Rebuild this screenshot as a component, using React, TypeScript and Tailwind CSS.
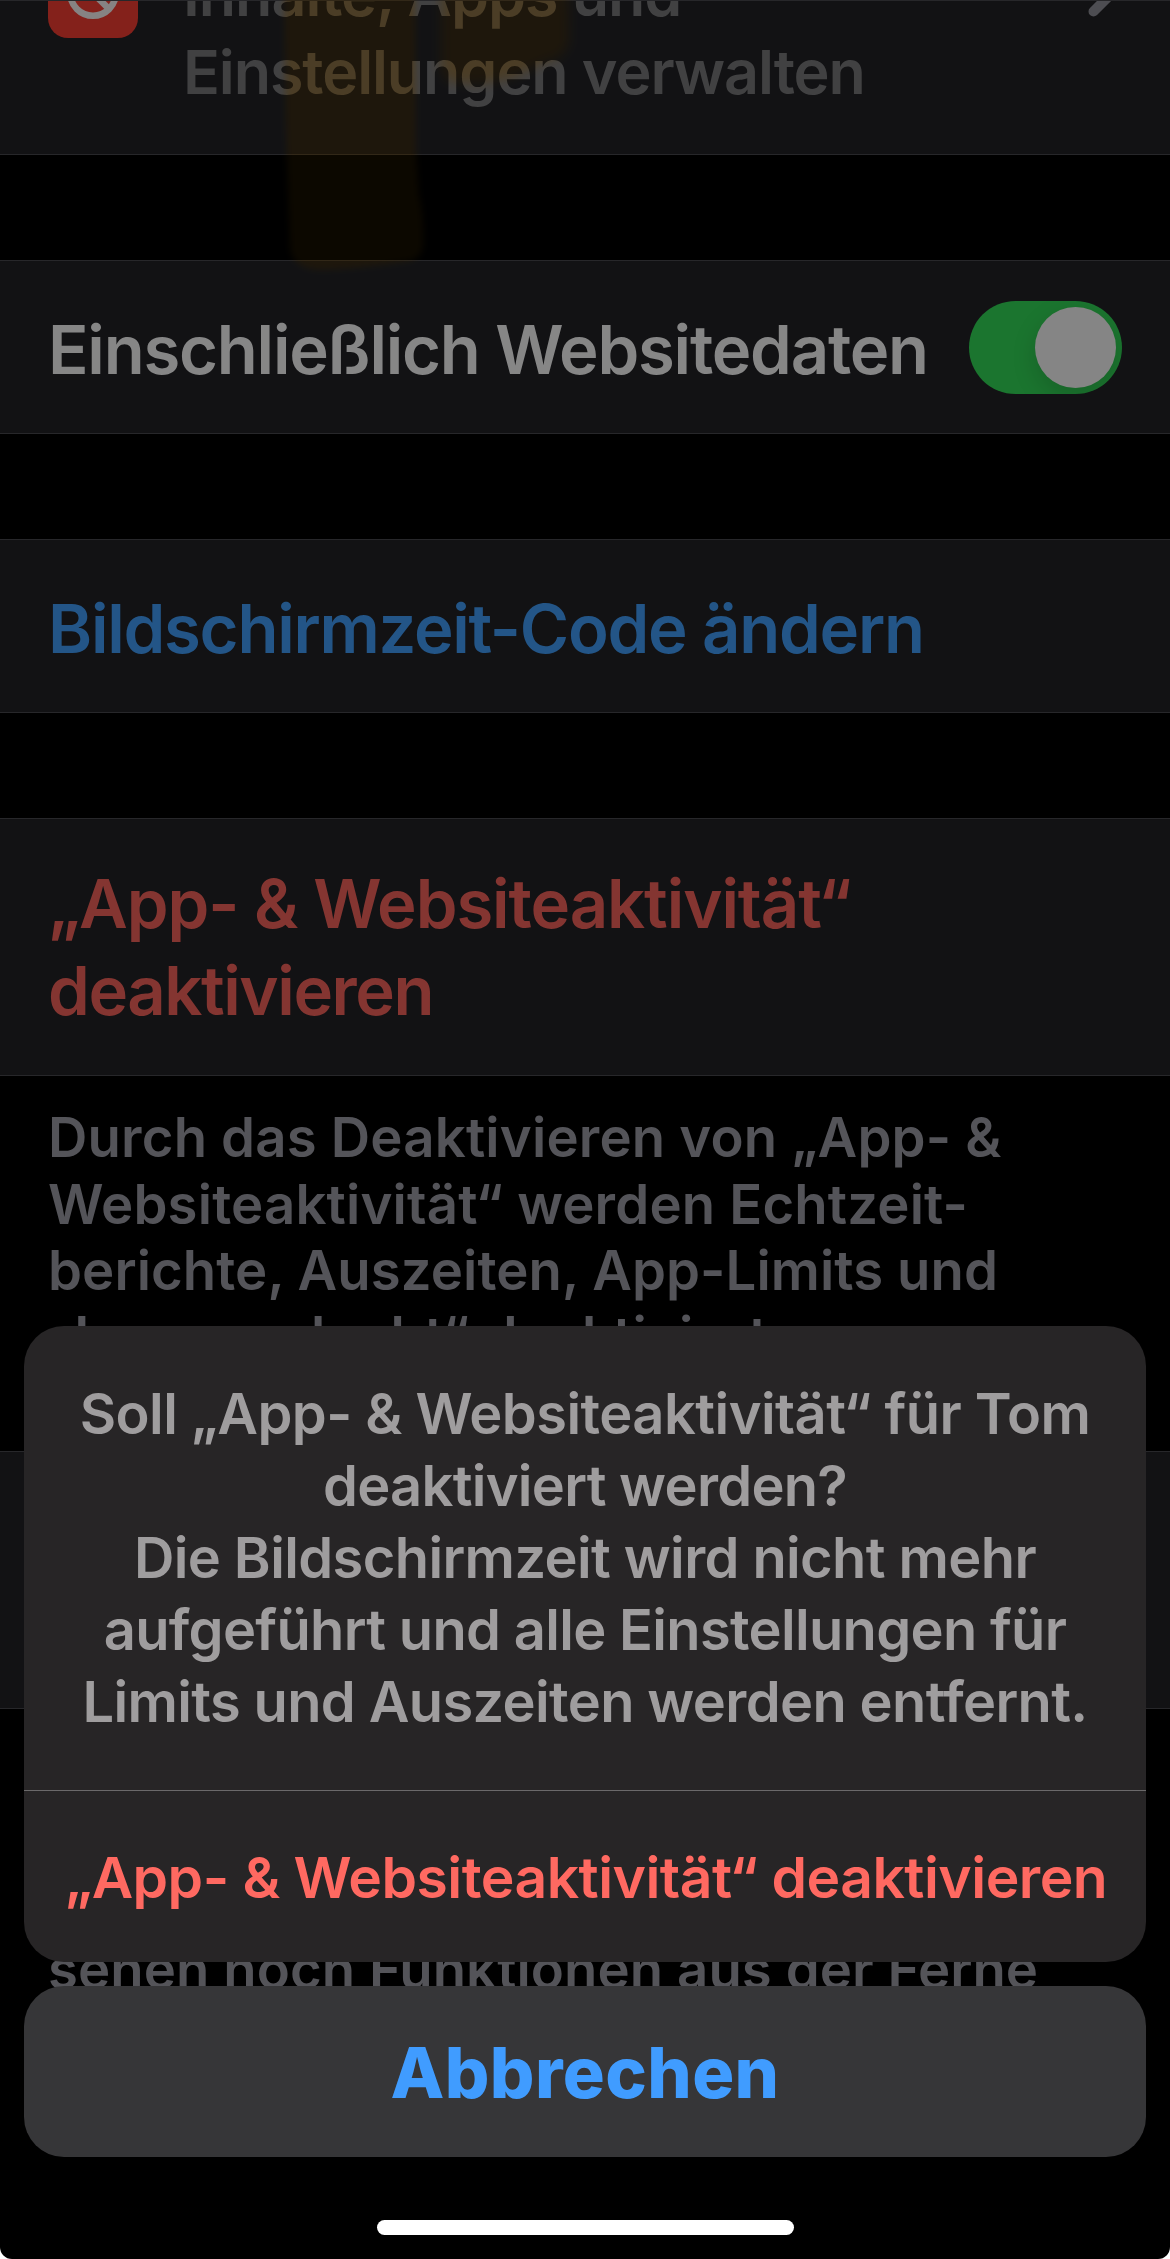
import { useState } from 'react';
import type { ReactNode } from 'react';
import clsx from 'clsx';

interface TextLine {
  text: string;
  tracking: string;
}

const contentLines: TextLine[] = [
  { text: 'Inhalte, Apps und', tracking: 'tracking-[-1.05px]' },
  { text: 'Einstellungen verwalten', tracking: 'tracking-[-1.1px]' },
];

const disableLines: TextLine[] = [
  { text: '„App- & Websiteaktivität“', tracking: 'tracking-[-1.08px]' },
  { text: 'deaktivieren', tracking: 'tracking-[-1.42px]' },
];

const footnoteLines: TextLine[] = [
  { text: 'Durch das Deaktivieren von „App- &', tracking: 'tracking-[0.18px]' },
  { text: 'Websiteaktivität“ werden Echtzeit-', tracking: 'tracking-[0.17px]' },
  { text: 'berichte, Auszeiten, App-Limits und', tracking: 'tracking-[0.09px]' },
  { text: '„Immer erlaubt“ deaktiviert.', tracking: 'tracking-[0.15px]' },
];

const messageLines: TextLine[] = [
  { text: 'Soll „App- & Websiteaktivität“ für Tom', tracking: 'tracking-[-0.54px]' },
  { text: 'deaktiviert werden?', tracking: 'tracking-[-0.72px]' },
  { text: 'Die Bildschirmzeit wird nicht mehr', tracking: 'tracking-[-0.61px]' },
  { text: 'aufgeführt und alle Einstellungen für', tracking: 'tracking-[-0.67px]' },
  { text: 'Limits und Auszeiten werden entfernt.', tracking: 'tracking-[-0.63px]' },
];

function Lines({ lines, className }: { lines: TextLine[]; className?: string }) {
  return (
    <p className={className}>
      {lines.map((line) => (
        <span key={line.text} className={clsx('block whitespace-nowrap', line.tracking)}>
          {line.text}
        </span>
      ))}
    </p>
  );
}

function Row({ children, className }: { children?: ReactNode; className?: string }) {
  return (
    <section className={clsx('flex shrink-0 border-y border-[#27272a] bg-[#121214] px-12', className)}>
      {children}
    </section>
  );
}

function RestrictionsIcon() {
  return (
    <div className="-mt-[53px] flex size-[90px] shrink-0 items-center justify-center rounded-[20px] bg-[#84211b]">
      <svg className="size-[54px]" viewBox="0 0 54 54" fill="none" stroke="#868383" strokeWidth="6.6">
        <circle cx="27" cy="27" r="22.7" />
        <path d="M11 11L43 43" />
      </svg>
    </div>
  );
}

function Chevron() {
  return (
    <svg
      className="-mt-[37px] mr-1 ml-auto h-[56px] w-[34px] shrink-0"
      viewBox="0 0 34 56"
      fill="none"
      stroke="#4d4d52"
      strokeWidth="10"
      strokeLinecap="round"
      strokeLinejoin="round"
    >
      <path d="M9.5 6.5L30 27L9.5 47.5" />
    </svg>
  );
}

function Toggle() {
  const [on, setOn] = useState(true);

  return (
    <button
      role="switch"
      aria-checked={on}
      aria-label="Einschließlich Websitedaten"
      onClick={() => setOn(!on)}
      className={clsx(
        'flex h-[93px] w-[153px] shrink-0 items-center overflow-hidden rounded-full p-1.5',
        on ? 'justify-end bg-[#1b752f]' : 'justify-start bg-[#27272a]'
      )}
    >
      <span className="size-[81px] rounded-full bg-[#858585] shadow-[0_9px_24px_rgba(0,0,0,0.16)]" />
    </button>
  );
}

// Highlighter strokes, drawn once as a tint and once as a glow
function MarkerStrokes({ color, className }: { color: string; className: string }) {
  return (
    <svg className={clsx('pointer-events-none absolute top-0 left-0', className)} width="620" height="300" viewBox="0 0 620 300">
      <g fill={color}>
        <path className="blur-[3px]" d="M284 -10H415L416 150L419 195Q424 215 423 245Q422 258 410 261Q365 268 325 270Q292 270 290 248L286 130Z" />
        <path className="blur-[6px]" d="M441 -10H568L569 40Q567 58 545 62L512 78Q470 88 446 80Q440 74 441 60Z" />
      </g>
    </svg>
  );
}

export default function App() {
  return (
    <div className="bg-white">
      <main className="relative isolate flex h-[2259px] w-[1170px] flex-col overflow-hidden rounded-b-[12px] bg-black font-['Inter','Liberation_Sans',sans-serif] font-semibold">
        <Row className="h-[155px] overflow-hidden">
          <RestrictionsIcon />
          <Lines lines={contentLines} className="-mt-[46px] ml-[45px] text-[61px] leading-[78px] text-[#414142]" />
          <Chevron />
        </Row>

        <Row className="mt-[105px] h-[174px] items-center justify-between">
          <span className="pt-[5px] text-[67px] leading-[87px] tracking-[-1.23px] whitespace-nowrap text-[#868686]">
            Einschließlich Websitedaten
          </span>
          <Toggle />
        </Row>

        <Row className="mt-[105px] h-[174px] items-center">
          <button className="pt-[5px] text-[67px] leading-[87px] tracking-[-1.25px] whitespace-nowrap text-[#235587]">
            Bildschirmzeit-Code ändern
          </button>
        </Row>

        <Row className="mt-[105px] h-[258px] items-start">
          <Lines lines={disableLines} className="mt-[41px] text-[67px] leading-[87px] text-[#843531]" />
        </Row>

        <Lines
          lines={footnoteLines}
          className="h-[375px] shrink-0 px-12 pt-[28.4px] text-[54.5px] leading-[66.2px] text-[#545459]"
        />

        <Row className="h-[258px]" />

        <p className="shrink-0 px-12 pt-[227px] text-[54.5px] leading-[66.2px] tracking-[0.07px] whitespace-nowrap text-[#545459]">
          sehen noch Funktionen aus der Ferne
        </p>

        <MarkerStrokes color="#f5ce91" className="mix-blend-multiply" />
        <MarkerStrokes color="#0c0800" className="mix-blend-plus-lighter" />

        {/* Action sheet */}
        <div className="absolute inset-x-6 top-[1326px] flex flex-col">
          <div className="flex h-[636px] flex-col overflow-hidden rounded-[40px] bg-[#272526]">
            <Lines
              lines={messageLines}
              className="h-[464px] pt-[51.6px] text-center text-[56px] leading-[72px] text-[#9f9d9e]"
            />
            <button className="flex flex-1 items-center justify-center border-t border-[#6b696a] pt-[3px] pl-[2px] text-[57px] tracking-[-0.53px] whitespace-nowrap text-[#ff6961]">
              „App- & Websiteaktivität“ deaktivieren
            </button>
          </div>
          <button className="mt-6 h-[171px] rounded-[40px] bg-[#363638] pt-[2px] text-[70px] font-extrabold tracking-[0.4px] text-[#409cff]">
            Abbrechen
          </button>
          <div className="mt-[63px] h-[15px] w-[417px] self-center rounded-full bg-white" />
        </div>
      </main>
    </div>
  );
}
